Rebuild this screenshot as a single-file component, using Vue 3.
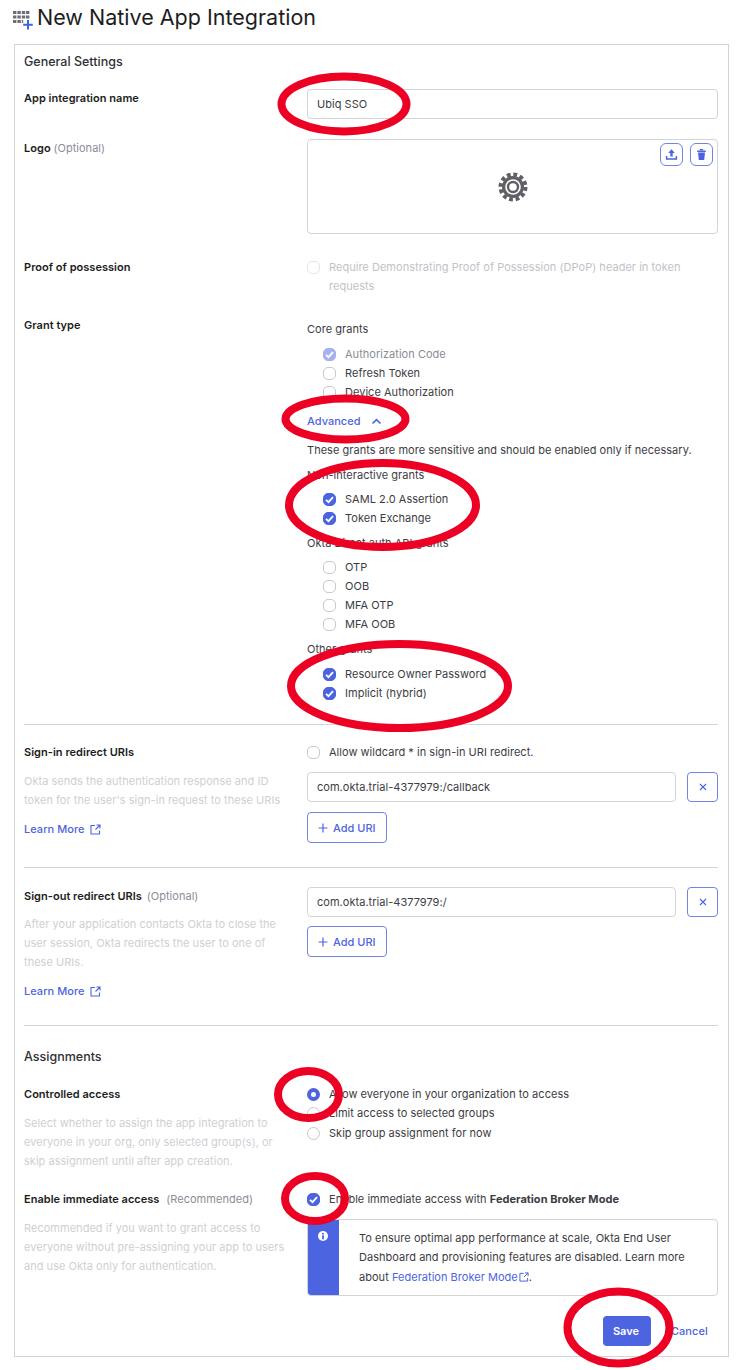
<script setup>
import { ref } from 'vue';

const coreGrants = ref([
  { label: 'Authorization Code', checked: true, disabled: true },
  { label: 'Refresh Token', checked: false },
  { label: 'Device Authorization', checked: false },
]);
const nonInteractive = ref([
  { label: 'SAML 2.0 Assertion', checked: true },
  { label: 'Token Exchange', checked: true },
]);
const directAuth = ref([
  { label: 'OTP', checked: false },
  { label: 'OOB', checked: false },
  { label: 'MFA OTP', checked: false },
  { label: 'MFA OOB', checked: false },
]);
const otherGrants = ref([
  { label: 'Resource Owner Password', checked: true },
  { label: 'Implicit (hybrid)', checked: true },
]);
const access = ref([
  { label: 'Allow everyone in your organization to access', checked: true },
  { label: 'Limit access to selected groups', checked: false },
  { label: 'Skip group assignment for now', checked: false },
]);
const groups = ref([
  { title: 'Non-interactive grants', items: nonInteractive.value, gap: 5 },
  { title: 'Okta Direct auth API grants', items: directAuth.value, gap: 5 },
  { title: 'Other grants', items: otherGrants.value, gap: 6 },
]);

// hand drawn marks on top of the screenshot
const marks = [
  { cx: 344, cy: 104, rx: 62.5, ry: 27.5 },
  { cx: 345.5, cy: 419, rx: 60, ry: 20.5 },
  { cx: 382.5, cy: 505, rx: 93.5, ry: 42 },
  { cx: 399.5, cy: 686, rx: 108.5, ry: 42 },
  { cx: 308.5, cy: 1094.5, rx: 30.5, ry: 23.5 },
  { cx: 315, cy: 1198.5, rx: 30, ry: 22.5 },
  { cx: 618.5, cy: 1327.5, rx: 51, ry: 36 },
];
</script>

<template>
  <div class="page">
    <header class="title-bar">
      <svg class="app-icon" width="20" height="20" viewBox="0 0 20 20">
        <g fill="#6e6e78">
          <rect x="0" y="1" width="3.4" height="3" /><rect x="4.4" y="1" width="3.4" height="3" />
          <rect x="8.800" y="1" width="3.4" height="3" /><rect x="13" y="1" width="3.4" height="3" />
          <rect x="0" y="5.500" width="3.4" height="3" /><rect x="4.4" y="5.500" width="3.4" height="3" />
          <rect x="8.800" y="5.500" width="3.4" height="3" /><rect x="13" y="5.500" width="3.4" height="3" />
          <rect x="0" y="10" width="3.4" height="3" /><rect x="4.4" y="10" width="3.4" height="3" />
          <rect x="8.800" y="10" width="1.4" height="3" />
        </g>
        <path d="M15 10v9.500M10.200 14.800h9.600" stroke="#3f63e6" stroke-width="2" fill="none" />
      </svg>
      <h1>New Native App Integration</h1>
    </header>

    <main class="card">
      <h2 class="section-title">General Settings</h2>

      <div class="row row-name">
        <div class="label">App integration name</div>
        <div class="input">Ubiq SSO</div>
      </div>

      <div class="row row-logo">
        <div class="label">Logo <span class="optional">(Optional)</span></div>
        <div class="logo-box">
          <svg class="gear" width="30" height="30" viewBox="0 0 30 30">
            <circle cx="15" cy="15" r="12.500" fill="none" stroke="#5f5f66" stroke-width="4" stroke-dasharray="3.800 2.740" />
            <circle cx="15" cy="15" r="11" fill="#5f5f66" />
            <circle cx="15" cy="15" r="7.800" fill="#fff" />
            <circle cx="15" cy="15" r="6.200" fill="#5f5f66" />
            <circle cx="15" cy="15" r="3.800" fill="#fff" />
          </svg>
          <div class="logo-actions">
            <button class="icon-btn">
              <svg width="13" height="13" viewBox="0 0 13 13">
                <path d="M6.500 1.200 9.800 5H7.700v3.600H5.300V5H3.200z" fill="#4c64e0" />
                <path d="M1.600 8v3h9.800V8" fill="none" stroke="#4c64e0" stroke-width="1.500" />
              </svg>
            </button>
            <button class="icon-btn">
              <svg width="13" height="13" viewBox="0 0 13 13">
                <path d="M2.200 2.400h8.600v1.500H2.200zM3 4.600h7l-.8 7.400H3.800z" fill="#4c64e0" />
                <path d="M4.800 1h3.400v1.400H4.800z" fill="#4c64e0" />
              </svg>
            </button>
          </div>
        </div>
      </div>

      <div class="row row-proof">
        <div class="label">Proof of possession</div>
        <label class="check faded">
          <span class="box box-faint"></span>
          <span>Require Demonstrating Proof of Possession (DPoP) header in token requests</span>
        </label>
      </div>

      <div class="row row-grant">
        <div class="label">Grant type</div>
        <div class="grants">
          <div class="group-title">Core grants</div>
          <div class="group-items gap-6">
            <label v-for="g in coreGrants" :key="g.label" class="check" :class="{ muted: g.disabled }">
              <span class="box" :class="{ on: g.checked, off: g.disabled }">
                <svg v-if="g.checked" width="13" height="13" viewBox="0 0 13 13">
                  <path d="M3 6.800 5.500 9.200l4.500-5" fill="none" stroke="#fff" stroke-width="1.800" />
                </svg>
              </span>
              <span>{{ g.label }}</span>
            </label>
          </div>
          <a class="advanced">Advanced
            <svg width="11" height="7" viewBox="0 0 11 7">
              <path d="M1.500 5.500 5.500 1.600l4 3.900" fill="none" stroke="#4c64e0" stroke-width="1.700" />
            </svg>
          </a>
          <p class="advanced-note">These grants are more sensitive and should be enabled only if necessary.</p>
          <div v-for="group in groups" :key="group.title" class="group">
            <div class="group-title">{{ group.title }}</div>
            <div class="group-items" :class="'gap-' + group.gap">
              <label v-for="g in group.items" :key="g.label" class="check">
                <span class="box" :class="{ on: g.checked }">
                  <svg v-if="g.checked" width="13" height="13" viewBox="0 0 13 13">
                    <path d="M3 6.800 5.500 9.200l4.500-5" fill="none" stroke="#fff" stroke-width="1.800" />
                  </svg>
                </span>
                <span>{{ g.label }}</span>
              </label>
            </div>
          </div>
        </div>
      </div>

      <hr class="divider divider-first" />

      <div class="row row-signin">
        <div>
          <div class="label">Sign-in redirect URIs</div>
          <p class="desc">Okta sends the authentication response and ID token for the user's sign-in request to these URIs</p>
          <a class="learn">Learn More
            <svg width="11" height="11" viewBox="0 0 11 11">
              <path d="M5 1.500H1v8.500h8.500V6.500M6.500 1h3.500v3.500M10 1 5.500 5.500" fill="none" stroke="#4c64e0" stroke-width="1.100" />
            </svg>
          </a>
        </div>
        <div>
          <label class="check">
            <span class="box"></span>
            <span>Allow wildcard * in sign-in URI redirect.</span>
          </label>
          <div class="uri-row">
            <div class="input">com.okta.trial-4377979:/callback</div>
            <button class="remove">
              <svg width="8" height="8" viewBox="0 0 8 8">
                <path d="M1 1l6 6M7 1 1 7" stroke="#4c64e0" stroke-width="1.100" />
              </svg>
            </button>
          </div>
          <button class="add-uri">
            <svg width="10" height="10" viewBox="0 0 10 10">
              <path d="M5 .5v9M.5 5h9" stroke="#4c64e0" stroke-width="1.200" />
            </svg>
            Add URI
          </button>
        </div>
      </div>

      <hr class="divider divider-signin" />

      <div class="row row-signout">
        <div>
          <div class="label">Sign-out redirect URIs <span class="optional spaced-small">(Optional)</span></div>
          <p class="desc desc-signout">After your application contacts Okta to close the user session, Okta redirects the user to one of these URIs.</p>
          <a class="learn">Learn More
            <svg width="11" height="11" viewBox="0 0 11 11">
              <path d="M5 1.500H1v8.500h8.500V6.500M6.500 1h3.500v3.500M10 1 5.500 5.500" fill="none" stroke="#4c64e0" stroke-width="1.100" />
            </svg>
          </a>
        </div>
        <div>
          <div class="uri-row uri-row-first">
            <div class="input">com.okta.trial-4377979:/</div>
            <button class="remove">
              <svg width="8" height="8" viewBox="0 0 8 8">
                <path d="M1 1l6 6M7 1 1 7" stroke="#4c64e0" stroke-width="1.100" />
              </svg>
            </button>
          </div>
          <button class="add-uri add-uri-tight">
            <svg width="10" height="10" viewBox="0 0 10 10">
              <path d="M5 .5v9M.5 5h9" stroke="#4c64e0" stroke-width="1.200" />
            </svg>
            Add URI
          </button>
        </div>
      </div>

      <hr class="divider divider-signout" />

      <h2 class="section-title assignments">Assignments</h2>

      <div class="row row-access">
        <div>
          <div class="label">Controlled access</div>
          <p class="desc">Select whether to assign the app integration to everyone in your org, only selected group(s), or skip assignment until after app creation.</p>
        </div>
        <div>
          <label v-for="a in access" :key="a.label" class="check radio-row">
            <span class="radio" :class="{ on: a.checked }"></span>
            <span>{{ a.label }}</span>
          </label>
        </div>
      </div>

      <div class="row row-enable">
        <div>
          <div class="label">Enable immediate access <span class="optional spaced">(Recommended)</span></div>
          <p class="desc">Recommended if you want to grant access to everyone without pre-assigning your app to users and use Okta only for authentication.</p>
        </div>
        <div>
          <label class="check">
            <span class="box on">
              <svg width="13" height="13" viewBox="0 0 13 13">
                <path d="M3 6.800 5.500 9.200l4.500-5" fill="none" stroke="#fff" stroke-width="1.800" />
              </svg>
            </span>
            <span>Enable immediate access with <b>Federation Broker Mode</b></span>
          </label>
          <div class="info-box">
            <div class="info-bar">
              <svg width="10" height="10" viewBox="0 0 10 10">
                <circle cx="5" cy="5" r="5" fill="#fff" />
                <path d="M4.100 2h1.800v1.500H4.100zM4.100 4.300h1.800V8.300H4.100z" fill="#4c64e0" />
              </svg>
            </div>
            <div class="info-text">
              <p>To ensure optimal app performance at scale, Okta End User Dashboard and provisioning features are disabled. Learn more</p>
              <p class="info-last">about <a class="info-link">Federation Broker Mode</a><svg width="10" height="10" viewBox="0 0 11 11">
                <path d="M5 1.500H1v8.500h8.500V6.500M6.500 1h3.500v3.500M10 1 5.500 5.500" fill="none" stroke="#4c64e0" stroke-width="1.100" />
              </svg><span>.</span></p>
            </div>
          </div>
        </div>
      </div>

      <footer class="actions">
        <button class="save">Save</button>
        <a class="cancel">Cancel</a>
      </footer>
    </main>

    <svg class="marks" width="743" height="1370" viewBox="0 0 743 1370">
      <ellipse v-for="m in marks" :key="m.cx" :cx="m.cx" :cy="m.cy" :rx="m.rx" :ry="m.ry" fill="none" stroke="#ec0023" stroke-width="8" />
    </svg>
  </div>
</template>

<style scoped>
.page {
  position: relative;
  width: 743px;
  height: 1370px;
  overflow: hidden;
  background: #fff;
  font-family: Inter, "Liberation Sans", sans-serif;
  font-size: 11px;
  line-height: 19px;
  letter-spacing: 0.03px;
  color: #2f2f35;
}
.title-bar {
  height: 44px;
  display: flex;
  align-items: flex-start;
  padding-left: 13px;
}
.app-icon {
  margin-top: 10px;
  margin-right: 4px;
}
h1 {
  margin: 0;
  padding-top: 2px;
  font-size: 21.5px;
  line-height: 30px;
  font-weight: 400;
  letter-spacing: 0;
  color: #1d1d21;
}
.card {
  margin-left: 14px;
  width: 715px;
  height: 1313px;
  box-sizing: border-box;
  border: 1px solid #d4d4d8;
  padding: 7px 10px 10px 9px;
}
.section-title {
  margin: 0;
  font-size: 12.500px;
  line-height: 19px;
  font-weight: 500;
  letter-spacing: 0;
  color: #2f2f35;
}
.row {
  display: grid;
  grid-template-columns: 283px 411px;
}
.row-name { margin-top: 18px; }
.row-logo { margin-top: 20px; }
.row-proof { margin-top: 24px; }
.row-grant { margin-top: 20px; }
.row-signin { margin-top: 18px; }
.row-signout { margin-top: 19px; }
.row-access { margin-top: 19px; }
.row-enable { margin-top: 19px; }
.label {
  font-weight: 600;
  color: #1d1d21;
}
.optional {
  font-weight: 400;
  color: #8c8c96;
}
.optional.spaced { margin-left: 4px; }
.optional.spaced-small { margin-left: 2px; }
.input {
  flex: 1;
  height: 30px;
  box-sizing: border-box;
  border: 1px solid #d4d4d8;
  border-radius: 4px;
  padding: 0 9px;
  line-height: 29px;
  color: #3c3c43;
}
.logo-box {
  position: relative;
  height: 95px;
  box-sizing: border-box;
  border: 1px solid #d4d4d8;
  border-radius: 4px;
  display: flex;
  align-items: center;
  justify-content: center;
}
.logo-actions {
  position: absolute;
  top: 3px;
  right: 4px;
  display: flex;
  gap: 7px;
}
.icon-btn {
  width: 23px;
  height: 23px;
  padding: 0;
  background: #fff;
  border: 1.500px solid #6f83e8;
  border-radius: 6px;
  display: flex;
  align-items: center;
  justify-content: center;
}
.check {
  display: flex;
  align-items: flex-start;
  gap: 9px;
  color: #3c3c43;
}
.faded { color: #c2c2c8; }
.muted { color: #8c8c96; }
.box {
  flex: none;
  width: 13px;
  height: 13px;
  margin-top: 3px;
  box-sizing: border-box;
  border: 1px solid #c8c8cd;
  border-radius: 5px;
  background: #fff;
  position: relative;
}
.box svg {
  position: absolute;
  left: -1px;
  top: -1px;
}
.box-faint { border-color: #e6e6e9; }
.box.on {
  background: #4c64e0;
  border-color: #4c64e0;
}
.box.off {
  background: #a6b1ef;
  border-color: #a6b1ef;
}
.grants { padding-top: 4px; }
.group-title { color: #3c3c43; }
.group-items { padding-left: 16px; }
.gap-6 { margin-top: 6px; }
.gap-5 { margin-top: 5px; }
.group { margin-top: 6px; }
.advanced {
  display: flex;
  align-items: center;
  gap: 10px;
  margin-top: 10px;
  font-weight: 500;
  color: #4c64e0;
}
.advanced-note {
  margin: 10px 0 0;
  color: #3c3c43;
}
.divider {
  margin: 0;
  border: 0;
  height: 1px;
  background: #d4d4d8;
}
.divider-first { margin-top: 21px; }
.divider-signin { margin-top: 24px; }
.divider-signout { margin-top: 24px; }
.desc {
  margin: 10px 0 0;
  max-width: 264px;
  color: #cfcfd4;
}
.desc-signout { margin-top: 9px; }
.learn {
  display: flex;
  align-items: center;
  gap: 6px;
  margin-top: 10px;
  font-weight: 500;
  color: #4c64e0;
}
.uri-row {
  display: flex;
  gap: 11px;
  margin-top: 10px;
}
.uri-row-first { margin-top: 0; }
.remove {
  width: 31px;
  height: 30px;
  padding: 0;
  background: #fff;
  border: 1.500px solid #6f83e8;
  border-radius: 4px;
  display: flex;
  align-items: center;
  justify-content: center;
}
.add-uri {
  display: flex;
  align-items: center;
  gap: 5px;
  width: 80px;
  height: 31px;
  margin-top: 10px;
  padding: 0 0 0 10px;
  box-sizing: border-box;
  background: #fff;
  border: 1.500px solid #6f83e8;
  border-radius: 4px;
  font: 500 11px Inter, "Liberation Sans", sans-serif;
  color: #4c64e0;
}
.add-uri-tight { margin-top: 9px; }
.assignments { margin-top: 21px; }
.radio-row { align-items: center; }
.radio-row:last-child { margin-top: 1px; }
.radio {
  flex: none;
  width: 13px;
  height: 13px;
  box-sizing: border-box;
  border: 1px solid #c8c8cd;
  border-radius: 50%;
  background: #fff;
}
.radio.on { border: 4px solid #4c64e0; }
.info-box {
  display: flex;
  height: 77px;
  margin-top: 10px;
  box-sizing: border-box;
  border: 1px solid #d4d4d8;
  border-radius: 4px;
  overflow: hidden;
}
.info-bar {
  flex: none;
  width: 32px;
  margin: -1px 0 -1px -1px;
  background: #4c64e0;
  display: flex;
  justify-content: center;
  padding-top: 12px;
  box-sizing: border-box;
}
.info-text {
  padding: 9px 12px 0 20px;
  color: #3c3c43;
}
.info-text p { margin: 0; }
.info-text .info-last { margin-top: 1px; }
.info-link { color: #4c64e0; }
.info-last svg {
  margin-left: 1px;
  vertical-align: -1px;
}
.actions {
  display: flex;
  align-items: center;
  margin-top: 20px;
  padding-left: 579px;
}
.save {
  width: 48px;
  height: 30px;
  padding: 0;
  border: 0;
  border-radius: 4px;
  background: #4c64e0;
  font: 600 11px Inter, "Liberation Sans", sans-serif;
  color: #fff;
  text-indent: -2px;
}
.cancel {
  margin-left: 20px;
  font-weight: 500;
  color: #4c64e0;
}
.marks {
  position: absolute;
  left: 0;
  top: 0;
  pointer-events: none;
}
</style>
